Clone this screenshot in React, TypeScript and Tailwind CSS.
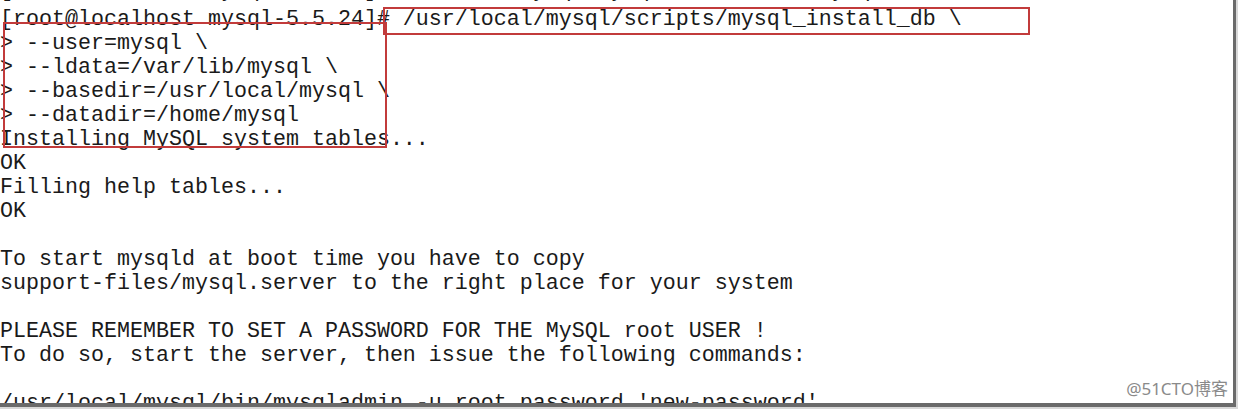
export default function App() {
  const lines = [
    "[root@localhost mysql-5.5.24]# chown -R mysql:mysql /usr/local/mysql/",
    "[root@localhost mysql-5.5.24]# /usr/local/mysql/scripts/mysql_install_db \\",
    "> --user=mysql \\",
    "> --ldata=/var/lib/mysql \\",
    "> --basedir=/usr/local/mysql \\",
    "> --datadir=/home/mysql",
    "Installing MySQL system tables...",
    "OK",
    "Filling help tables...",
    "OK",
    "",
    "To start mysqld at boot time you have to copy",
    "support-files/mysql.server to the right place for your system",
    "",
    "PLEASE REMEMBER TO SET A PASSWORD FOR THE MySQL root USER !",
    "To do so, start the server, then issue the following commands:",
    "",
    "/usr/local/mysql/bin/mysqladmin -u root password 'new-password'",
  ];

  return (
    <div className="w-[1238px] h-[409px] overflow-hidden bg-[#d8d8d8]">
      <div className="relative w-[1236px] h-[407px] bg-[#6a6a6a] pr-[2px] pb-[2px]">
        <div className="relative w-[1233px] h-[403px] overflow-hidden bg-white">
          <div className="mt-[-16px] flex flex-col font-['Liberation_Mono','Courier_New',monospace] text-[21.67px] leading-6 text-[#1a1a1a]">
            {lines.map((line, i) => (
              <div key={i} className={i === 0 ? "h-6 whitespace-pre -mt-[5px] mb-[5px]" : "h-6 whitespace-pre"}>
                {line}
              </div>
            ))}
          </div>

          <div className="absolute left-[383px] top-[7px] w-[647px] h-[28px] border-2 border-[#c23b3b]" />
          <div className="absolute left-[3px] top-[22px] w-[384px] h-[126px] border-2 border-[#c23b3b]" />

          <div className="absolute right-[5px] bottom-[4px] font-['Noto_Sans','Noto_Sans_CJK_SC',sans-serif] text-[17px] leading-5 text-[#8a8a8a]">
            @51CTO博客
          </div>
        </div>
      </div>
    </div>
  );
}
